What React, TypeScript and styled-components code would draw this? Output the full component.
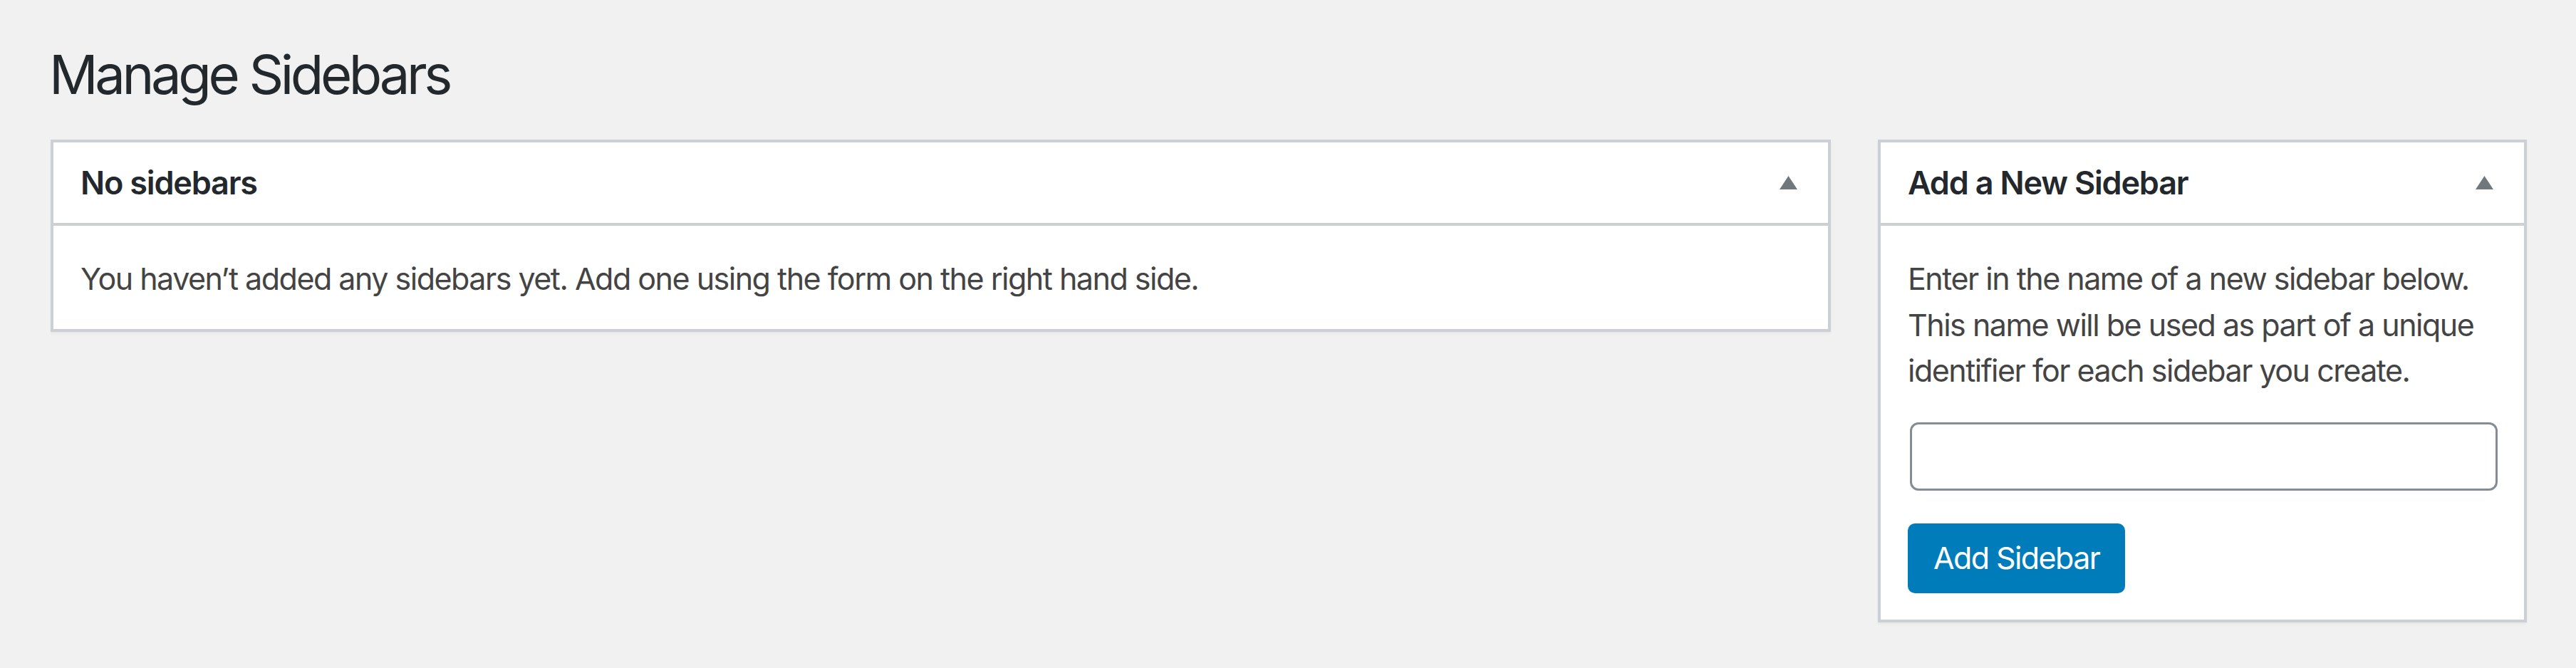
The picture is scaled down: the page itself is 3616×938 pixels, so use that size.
import React from "react";
import styled, { createGlobalStyle } from "styled-components";

const GlobalStyle = createGlobalStyle`
  html, body {
    margin: 0;
    padding: 0;
    background: #f1f1f1;
  }
  body {
    font-family: Inter, "Noto Sans", "Liberation Sans", sans-serif;
    color: #444;
  }
  * { box-sizing: border-box; }
`;

const Page = styled.div`
  min-height: 938px;
  padding: 55px 69px 40px 69px;
`;

const Title = styled.h1`
  margin: 0 0 42px 0;
  font-size: 76px;
  line-height: 99px;
  font-weight: 400;
  letter-spacing: -4.4px;
  color: #23282d;
`;

const Columns = styled.div`
  display: flex;
  align-items: flex-start;
  gap: 66px;
  padding-left: 2px;
`;

const Postbox = styled.section<{ $width?: number }>`
  min-width: 0;
  background: #fff;
  border: 4px solid #ccd0d4;
  box-shadow: 0 3px 3px rgba(0, 0, 0, 0.04);
  ${(p) => (p.$width ? `flex: 0 0 ${p.$width}px;` : `flex: 1 1 auto;`)}
`;

const Header = styled.header`
  display: flex;
  align-items: center;
  justify-content: space-between;
  height: 117px;
  padding: 0 43px 0 38px;
  border-bottom: 4px solid #ccd0d4;
`;

const HeaderTitle = styled.h2`
  margin: 0;
  font-size: 45px;
  line-height: 1.4;
  font-weight: 600;
  letter-spacing: -1.2px;
  color: #23282d;
`;

const Toggle = styled.span`
  display: inline-flex;
  width: 25px;
  height: 19px;
  color: #72777c;
`;

const Body = styled.div<{ $bottom: number }>`
  padding: 42px 38px ${(p) => p.$bottom}px 38px;
`;

const Text = styled.p`
  margin: 0;
  font-size: 43px;
  line-height: 64.5px;
  letter-spacing: -1.5px;
  color: #444;
  white-space: nowrap;
`;

const NameInput = styled.input`
  display: block;
  width: calc(100% - 2px);
  height: 96px;
  margin: 40px 0 0 3px;
  border: 3px solid #858c94;
  border-radius: 12px;
  background: #fff;
  font-size: 43px;
  font-family: inherit;
  padding: 0 24px;
  outline: none;
`;

const PrimaryButton = styled.button`
  display: inline-flex;
  align-items: center;
  height: 98px;
  margin-top: 46px;
  padding: 0 33px;
  background: #007cba;
  border: 3px solid #007cba;
  border-radius: 10px;
  color: #fff;
  font-family: inherit;
  font-size: 43px;
  letter-spacing: -1.6px;
  line-height: 1;
  cursor: pointer;
`;

const ArrowUp = () => (
  <Toggle aria-hidden>
    <svg width="25" height="19" viewBox="0 0 25 19">
      <polygon points="12.5,0 25,19 0,19" fill="currentColor" />
    </svg>
  </Toggle>
);

export default function App() {
  return (
    <>
      <GlobalStyle />
      <Page>
        <Title>Manage Sidebars</Title>
        <Columns>
          <Postbox>
            <Header>
              <HeaderTitle>No sidebars</HeaderTitle>
              <ArrowUp />
            </Header>
            <Body $bottom={38}>
              <Text>
                You haven’t added any sidebars yet. Add one using the form on the right hand side.
              </Text>
            </Body>
          </Postbox>
          <Postbox $width={911}>
            <Header>
              <HeaderTitle>Add a New Sidebar</HeaderTitle>
              <ArrowUp />
            </Header>
            <Body $bottom={37}>
              <Text>
                Enter in the name of a new sidebar below.
                <br />
                This name will be used as part of a unique
                <br />
                identifier for each sidebar you create.
              </Text>
              <NameInput type="text" aria-label="Sidebar name" />
              <PrimaryButton type="button">Add Sidebar</PrimaryButton>
            </Body>
          </Postbox>
        </Columns>
      </Page>
    </>
  );
}
